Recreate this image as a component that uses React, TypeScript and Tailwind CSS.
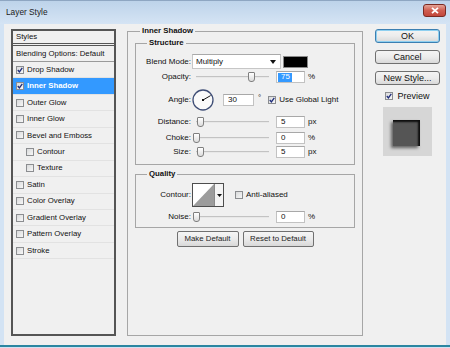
import React from "react";

const font = "font-['Liberation_Sans',Arial,sans-serif]";

const styleItems = [
  { label: "Drop Shadow", on: true },
  { label: "Inner Shadow", on: true, sel: true },
  { label: "Outer Glow" },
  { label: "Inner Glow" },
  { label: "Bevel and Emboss" },
  { label: "Contour", indent: true },
  { label: "Texture", indent: true },
  { label: "Satin" },
  { label: "Color Overlay" },
  { label: "Gradient Overlay" },
  { label: "Pattern Overlay" },
  { label: "Stroke" },
];

function Check({ on }: { on?: boolean }) {
  return (
    <span className="w-[8px] h-[8px] shrink-0 border border-[#8b8d90] bg-gradient-to-br from-[#d9dadb] to-[#f7f7f7] flex items-center justify-center">
      {on && (
        <svg width="6" height="6" viewBox="0 0 6 6">
          <path d="M0.8 3 L2.4 4.9 L5.3 0.8" stroke="#1d2b7a" strokeWidth="1.3" fill="none" />
        </svg>
      )}
    </span>
  );
}

function Slider({ pct }: { pct: number }) {
  return (
    <div className="relative w-[80px] h-[12px] pl-[4px] pr-[3px] flex items-center">
      <div className="w-full h-[2px] bg-[#c3c3c3] border-b border-[#e8e8e8]" />
      {/* thumb */}
      <div
        className="absolute top-[1px] w-[7px] h-[10px] rounded-b-[3px] rounded-t-[1px] border border-[#7f7f7f] bg-gradient-to-b from-white to-[#dcdcdc]"
        style={{ left: `calc(4px + ${pct * 0.73}px - 3px)` }}
      />
    </div>
  );
}

function Num({ v, w = 29, sel }: { v: string; w?: number; sel?: boolean }) {
  return (
    <span
      className={`h-[12px] bg-white border border-[#c2c2c2] border-t-[#a8a8a8] flex items-center text-[8px] leading-none ${sel ? "pl-[1px]" : "pl-[4px]"}`}
      style={{ width: w }}
    >
      {sel ? <span className="bg-[#3399ff] text-white pl-[3px] pr-[2px] h-[9px] flex items-center">{v}</span> : v}
    </span>
  );
}

function Label({ children }: { children: React.ReactNode }) {
  return <span className="w-[56px] shrink-0 text-right pr-[1px] text-[8px] leading-none">{children}</span>;
}

function SliderRow({ label, pct, v, unit, sel, h = 12 }: { label: string; pct: number; v: string; unit: string; sel?: boolean; h?: number }) {
  return (
    <div className="flex items-center" style={{ height: h }}>
      <Label>{label}</Label>
      <Slider pct={pct} />
      <span className="ml-[4px]">
        <Num v={v} sel={sel} />
      </span>
      <span className="ml-[3px] text-[8px] leading-none">{unit}</span>
    </div>
  );
}

function SmallButton({ children, w }: { children: React.ReactNode; w: number }) {
  return (
    <div
      className="h-[16px] flex items-center justify-center rounded-[2px] border border-[#707070] bg-gradient-to-b from-[#f5f5f5] via-[#ebebeb] to-[#d8d8d8] text-[7.8px] leading-none text-[#222]"
      style={{ width: w }}
    >
      {children}
    </div>
  );
}

function SideButton({ children, primary }: { children: React.ReactNode; primary?: boolean }) {
  return (
    <div
      className={`h-[14px] w-[65px] flex items-center justify-center rounded-[3px] border bg-gradient-to-b from-[#f4f4f4] via-[#ececec] to-[#d9d9d9] text-[9px] leading-none text-[#111] ${
        primary ? "border-[#3c7fb1] shadow-[inset_0_0_0_1px_#8fd0f0]" : "border-[#707070]"
      }`}
    >
      {children}
    </div>
  );
}

export default function App() {
  return (
    <div className={`w-[450px] h-[348px] flex flex-col bg-[#d3e3f4] overflow-hidden text-[#111] ${font}`}>
      {/* Title bar */}
      <div className="h-[24px] shrink-0 flex items-start justify-between border-t border-[#8ea6c2] bg-gradient-to-b from-[#bdd3ea] to-[#d5e4f4] pl-[6px] pr-[4px]">
        <span className="mt-[6px] text-[8.3px] leading-[10px] text-[#1b1b1b]">Layer Style</span>
        <div className="mt-[3px] w-[23px] h-[13px] rounded-[3px] border border-[#7a2a22] bg-gradient-to-b from-[#e3a397] via-[#cf5d50] to-[#c2463a] flex items-center justify-center">
          <svg width="8" height="7" viewBox="0 0 8 7">
            <path d="M1 0.8 L7 6.2 M7 0.8 L1 6.2" stroke="white" strokeWidth="1.8" />
          </svg>
        </div>
      </div>

      {/* Body */}
      <div className="h-[321px] mx-[4px] bg-[#f0f0f0] flex items-start">
        {/* Styles list */}
        <div className="ml-[7px] mt-[5px] w-[105px] h-[307px] border-2 border-[#555] flex flex-col text-[7.8px] leading-none">
          <div className="h-[15px] pl-[3px] flex items-center border-b-[3px] border-double border-[#555]">Styles</div>
          <div className="h-[16px] pl-[3px] flex items-center border-b border-[#9a9a9a]">Blending Options: Default</div>
          {styleItems.map((it) => (
            <div
              key={it.label}
              className={`h-[16.45px] flex items-center gap-[3px] border-b border-[#e2e2e2] ${it.indent ? "pl-[13px]" : "pl-[3px]"} ${
                it.sel ? "bg-[#3399ff] text-white font-bold" : ""
              }`}
            >
              <Check on={it.on} />
              <span>{it.label}</span>
            </div>
          ))}
        </div>

        {/* Main group */}
        <fieldset className="ml-[11px] mt-[2px] w-[236px] border border-[#a6a6a6] pb-[88px]">
          <legend className="ml-[12px] px-[2px] text-[7.8px] leading-[10px] font-bold">Inner Shadow</legend>

          <fieldset className="mx-[7px] mt-[2px] border border-[#a6a6a6] pb-[6px]">
            <legend className="ml-[11px] px-[2px] text-[7.8px] leading-[10px] font-bold">Structure</legend>

            <div className="mt-[6px] h-[15px] flex items-center">
              <Label>Blend Mode:</Label>
              <div className="w-[89px] h-[15px] bg-white border border-[#c6c6c6] border-t-[#a9a9a9] flex items-center justify-between pl-[3px] pr-[4px] text-[8px] leading-none">
                <span>Multiply</span>
                <svg width="6" height="4" viewBox="0 0 6 4">
                  <path d="M0 0 H6 L3 4 Z" fill="#111" />
                </svg>
              </div>
              <div className="ml-[2px] w-[25px] h-[12px] bg-black border border-[#8a8a8a]" />
            </div>

            <div className="mt-[2px]">
              <SliderRow label="Opacity:" pct={75} v="75" unit="%" sel />
            </div>

            <div className="mt-[6px] h-[22px] flex items-center">
              <Label>Angle:</Label>
              <svg width="22" height="22" viewBox="0 0 22 22" className="shrink-0">
                <circle cx="11" cy="11" r="10" fill="#fafafa" stroke="#3f4e76" strokeWidth="1.3" />
                <line x1="11" y1="11" x2="18.6" y2="6.6" stroke="#111" strokeWidth="1" />
                <rect x="10" y="10" width="2" height="2" fill="#111" />
              </svg>
              <span className="ml-[9px]">
                <Num v="30" w={31} />
              </span>
              <span className="ml-[4px] self-start mt-[5px] text-[8px] leading-none">°</span>
              <span className="ml-[7px] flex items-center gap-[3px] text-[8px] leading-none">
                <Check on />
                Use Global Light
              </span>
            </div>

            <div className="mt-[5px]">
              <SliderRow label="Distance:" pct={5} v="5" unit="px" />
            </div>
            <div className="mt-[4px]">
              <SliderRow label="Choke:" pct={0} v="0" unit="%" />
            </div>
            <div className="mt-[2px]">
              <SliderRow label="Size:" pct={5} v="5" unit="px" />
            </div>
          </fieldset>

          <fieldset className="mx-[7px] mt-[4px] border border-[#a6a6a6] pb-[4px]">
            <legend className="ml-[11px] px-[2px] text-[7.8px] leading-[10px] font-bold">Quality</legend>

            <div className="mt-[4px] h-[24px] flex items-center">
              <Label>Contour:</Label>
              <div className="w-[32px] h-[24px] border border-[#4d4d4d] flex bg-white">
                <svg width="21" height="22" viewBox="0 0 21 22" className="shrink-0">
                  <rect width="21" height="22" fill="#fff" />
                  <polygon points="0,22 21,0 21,22" fill="#9c9c9c" />
                </svg>
                <div className="flex-1 border-l border-[#8a8a8a] bg-[#f4f4f4] flex items-center justify-center">
                  <svg width="5" height="3" viewBox="0 0 5 3">
                    <path d="M0 0 H5 L2.5 3 Z" fill="#111" />
                  </svg>
                </div>
              </div>
              <span className="ml-[11px] flex items-center gap-[3px] text-[8px] leading-none">
                <Check />
                Anti-aliased
              </span>
            </div>

            <div className="mt-[4px]">
              <SliderRow label="Noise:" pct={0} v="0" unit="%" />
            </div>
          </fieldset>

          <div className="mt-[3px] flex justify-center gap-[4px]">
            <SmallButton w={62}>Make Default</SmallButton>
            <SmallButton w={71}>Reset to Default</SmallButton>
          </div>
        </fieldset>

        {/* Right column */}
        <div className="ml-[12px] mt-[5px] w-[65px] flex flex-col items-center">
          <SideButton primary>OK</SideButton>
          <div className="mt-[7px]">
            <SideButton>Cancel</SideButton>
          </div>
          <div className="mt-[7px]">
            <SideButton>New Style...</SideButton>
          </div>
          <div className="mt-[6px] h-[10px] flex items-center gap-[4px] text-[9px] leading-none">
            <Check on />
            Preview
          </div>
          <div className="mt-[6px] w-[49px] h-[49px] bg-[#d6d6d6] pl-[10px] pt-[13px]">
            <div className="w-[27px] h-[26px] bg-[#555] shadow-[-2px_2px_3px_rgba(0,0,0,0.55),inset_-2px_2px_2px_rgba(0,0,0,0.85)]" />
          </div>
        </div>
      </div>

      {/* Bottom frame */}
      <div className="h-[3px] border-t-2 border-[#2b86a1] bg-[#cfe2f3]" />
    </div>
  );
}
